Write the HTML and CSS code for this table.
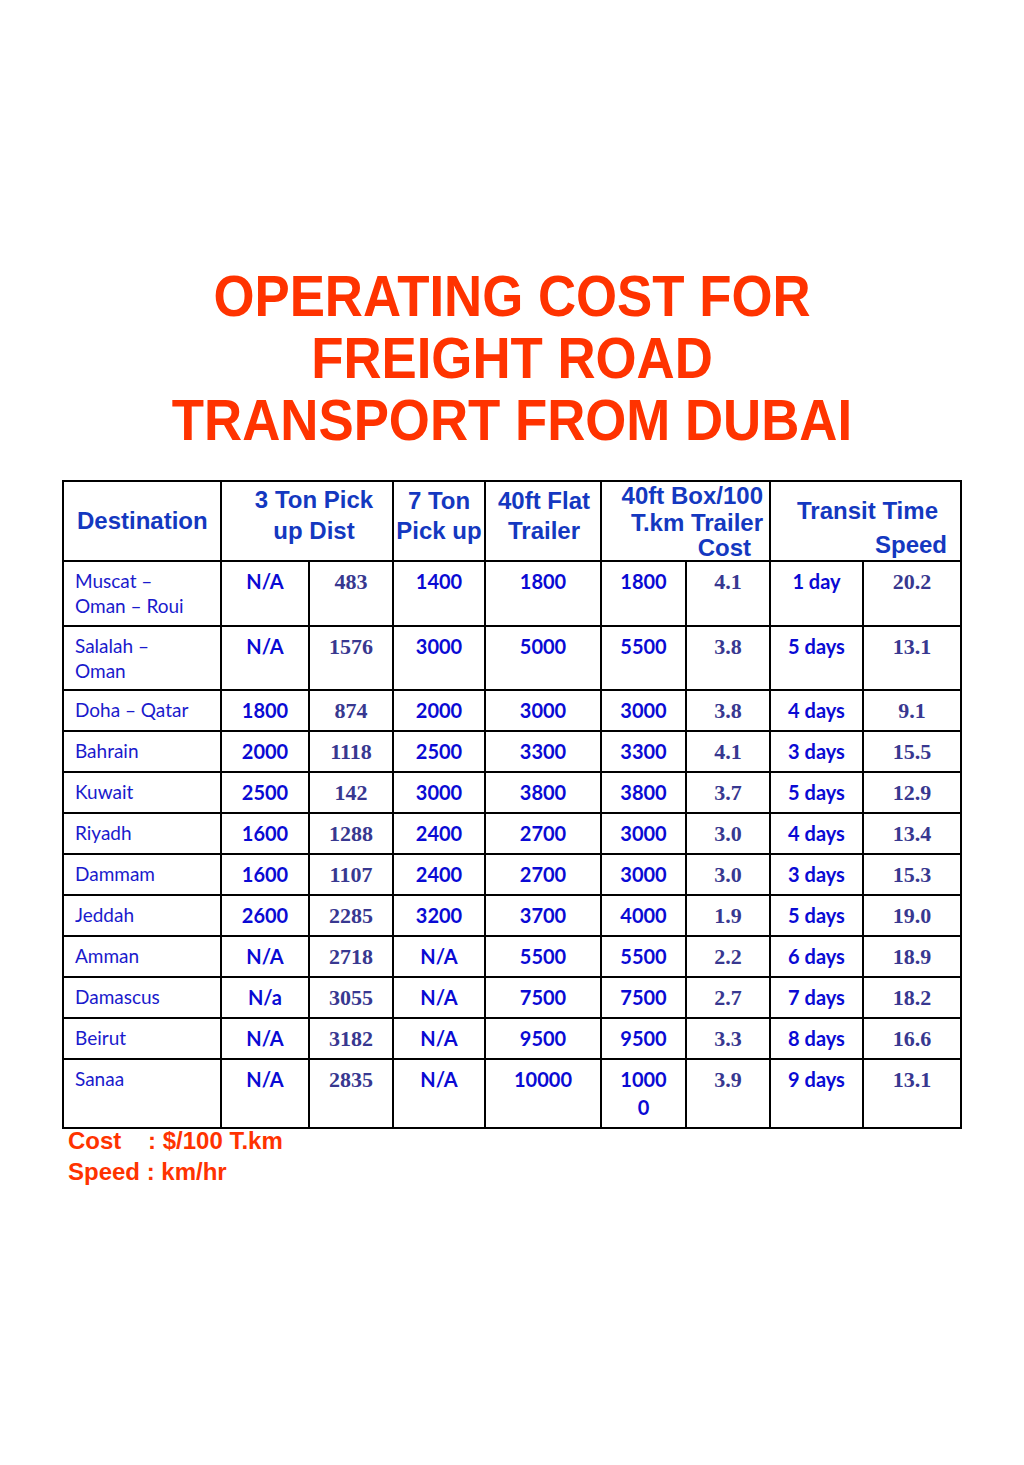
FILE: index.html
```html
<!DOCTYPE html>
<html lang="en">
<head>
<meta charset="utf-8">
<title>Operating Cost for Freight Road Transport from Dubai</title>
<link rel="stylesheet" href="styles.css">
</head>
<body>
<main class="page">
  <h1 class="title">OPERATING COST FOR<br>FREIGHT ROAD<br>TRANSPORT FROM DUBAI</h1>
  <table class="cost">
    <colgroup>
      <col class="c-dest"><col class="c-3a"><col class="c-3b"><col class="c-7"><col class="c-flat"><col class="c-boxa"><col class="c-boxb"><col class="c-tt"><col class="c-sp">
    </colgroup>
    <thead>
      <tr class="head">
        <th><div class="hd hd-dest">Destination</div></th>
        <th colspan="2"><div class="hd hd-3">3 Ton Pick<br>up Dist</div></th>
        <th><div class="hd hd-7">7 Ton<br>Pick up</div></th>
        <th><div class="hd hd-flat">40ft Flat<br>Trailer</div></th>
        <th colspan="2"><div class="hd hd-box"><span class="ln">40ft Box/100</span><span class="ln">T.km Trailer</span><span class="ln ln-cost">Cost</span></div></th>
        <th colspan="2"><div class="hd hd-tt"><span class="ln ln-c">Transit Time</span><span class="ln ln-r">Speed</span></div></th>
      </tr>
    </thead>
    <tbody>
      <tr class="tall"><td class="dest">Muscat –<br>Oman – Roui</td><td class="b">N/A</td><td class="s">483</td><td class="b">1400</td><td class="b">1800</td><td class="b">1800</td><td class="s">4.1</td><td class="b">1 day</td><td class="s">20.2</td></tr>
      <tr class="tall2"><td class="dest">Salalah –<br>Oman</td><td class="b">N/A</td><td class="s">1576</td><td class="b">3000</td><td class="b">5000</td><td class="b">5500</td><td class="s">3.8</td><td class="b">5 days</td><td class="s">13.1</td></tr>
      <tr><td class="dest">Doha – Qatar</td><td class="b">1800</td><td class="s">874</td><td class="b">2000</td><td class="b">3000</td><td class="b">3000</td><td class="s">3.8</td><td class="b">4 days</td><td class="s">9.1</td></tr>
      <tr><td class="dest">Bahrain</td><td class="b">2000</td><td class="s">1118</td><td class="b">2500</td><td class="b">3300</td><td class="b">3300</td><td class="s">4.1</td><td class="b">3 days</td><td class="s">15.5</td></tr>
      <tr><td class="dest">Kuwait</td><td class="b">2500</td><td class="s">142</td><td class="b">3000</td><td class="b">3800</td><td class="b">3800</td><td class="s">3.7</td><td class="b">5 days</td><td class="s">12.9</td></tr>
      <tr><td class="dest">Riyadh</td><td class="b">1600</td><td class="s">1288</td><td class="b">2400</td><td class="b">2700</td><td class="b">3000</td><td class="s">3.0</td><td class="b">4 days</td><td class="s">13.4</td></tr>
      <tr><td class="dest">Dammam</td><td class="b">1600</td><td class="s">1107</td><td class="b">2400</td><td class="b">2700</td><td class="b">3000</td><td class="s">3.0</td><td class="b">3 days</td><td class="s">15.3</td></tr>
      <tr><td class="dest">Jeddah</td><td class="b">2600</td><td class="s">2285</td><td class="b">3200</td><td class="b">3700</td><td class="b">4000</td><td class="s">1.9</td><td class="b">5 days</td><td class="s">19.0</td></tr>
      <tr><td class="dest">Amman</td><td class="b">N/A</td><td class="s">2718</td><td class="b">N/A</td><td class="b">5500</td><td class="b">5500</td><td class="s">2.2</td><td class="b">6 days</td><td class="s">18.9</td></tr>
      <tr><td class="dest">Damascus</td><td class="b">N/a</td><td class="s">3055</td><td class="b">N/A</td><td class="b">7500</td><td class="b">7500</td><td class="s">2.7</td><td class="b">7 days</td><td class="s">18.2</td></tr>
      <tr><td class="dest">Beirut</td><td class="b">N/A</td><td class="s">3182</td><td class="b">N/A</td><td class="b">9500</td><td class="b">9500</td><td class="s">3.3</td><td class="b">8 days</td><td class="s">16.6</td></tr>
      <tr class="tall3"><td class="dest">Sanaa</td><td class="b">N/A</td><td class="s">2835</td><td class="b">N/A</td><td class="b">10000</td><td class="b b-wrap">1000<br>0</td><td class="s">3.9</td><td class="b">9 days</td><td class="s">13.1</td></tr>
    </tbody>
  </table>
  <div class="legend">
    <div class="legend-line">Cost    : $/100 T.km</div>
    <div class="legend-line">Speed : km/hr</div>
  </div>
</main>
</body>
</html>
```

FILE: styles.css
```css
html, body {
  margin: 0;
  padding: 0;
  background: #ffffff;
}

.page {
  width: 1024px;
  min-height: 1465px;
  padding-top: 265px;
  box-sizing: border-box;
}

.title {
  margin: 0;
  font-family: "Liberation Sans", Arial, sans-serif;
  font-weight: 700;
  font-size: 58px;
  line-height: 62px;
  text-align: center;
  color: #ff3300;
  transform: scaleX(0.91);
  transform-origin: 512px 0;
}

.cost {
  margin: 29px auto 0;
  width: 900px;
  table-layout: fixed;
  border-collapse: collapse;
  border: 2px solid #000;
}

.c-dest { width: 158px; }
.c-3a { width: 88px; }
.c-3b { width: 84px; }
.c-7 { width: 92px; }
.c-flat { width: 116px; }
.c-boxa { width: 85px; }
.c-boxb { width: 84px; }
.c-tt { width: 93px; }
.c-sp { width: 98px; }

.cost th,
.cost td {
  border: 2px solid #000;
  padding: 0;
  vertical-align: top;
}

.cost th {
  font-family: "Liberation Sans", Arial, sans-serif;
  font-weight: 700;
  font-size: 24px;
  color: #1438c0;
  text-align: center;
  white-space: nowrap;
}

.head { height: 80px; }

.hd {
  height: 78px;
  box-sizing: border-box;
  line-height: 30px;
}

.hd-dest { padding-top: 24px; text-align: left; padding-left: 13px; }
.hd-3 { padding-top: 2px; padding-left: 14px; line-height: 31px; }
.hd-7 { padding-top: 4px; }
.hd-flat { padding-top: 4px; padding-left: 2px; }
.hd-box { padding-top: 0; line-height: 27px; text-align: right; padding-right: 6px; }
.hd-tt { padding-top: 12px; line-height: 34px; }

.ln { display: block; }
.ln-cost { padding-right: 12px; line-height: 24px; }
.ln-c { text-align: center; padding-left: 4px; }
.ln-r { text-align: right; padding-right: 13px; }

.cost tbody tr { height: 41px; }
.cost tbody tr.tall { height: 65px; }
.cost tbody tr.tall2 { height: 64px; }
.cost tbody tr.tall3 { height: 69px; }

.cost td {
  padding-top: 7px;
  line-height: 25px;
  text-align: center;
}

.cost td.dest {
  text-align: left;
  padding-left: 11px;
  padding-top: 6px;
  font-family: Lato, "Open Sans", sans-serif;
  font-size: 19px;
  color: #1a1acc;
}

.cost td.b {
  font-family: Lato, "Open Sans", sans-serif;
  font-weight: 700;
  font-size: 20px;
  color: #0a0ad4;
}

.cost td.b-wrap { line-height: 28px; padding-top: 5px; }

.cost td.s {
  font-family: "Liberation Serif", "Times New Roman", serif;
  font-weight: 700;
  font-size: 22px;
  color: #383890;
}

.legend {
  margin-top: -4px;
  padding-left: 68px;
  font-family: "Liberation Sans", Arial, sans-serif;
  font-weight: 700;
  font-size: 24px;
  line-height: 31px;
  color: #ff3300;
}

.legend-line { white-space: pre; }
```
